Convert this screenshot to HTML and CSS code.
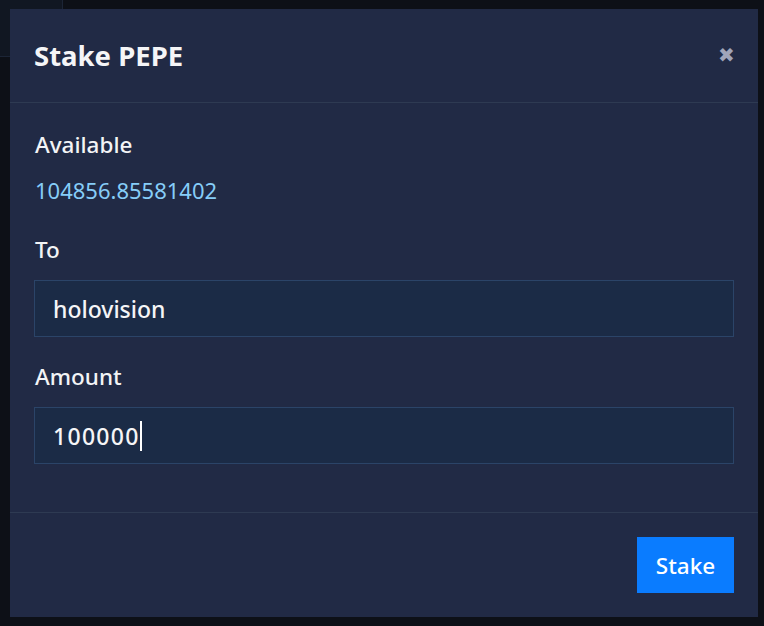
FILE: index.html
```html
<!DOCTYPE html>
<html>
<head>
<meta charset="utf-8">
<link rel="stylesheet" href="styles.css">
</head>
<body>
<div class="backdrop-card"></div>
<div class="modal">
  <div class="modal-header">
    <h2 class="modal-title">Stake PEPE</h2>
    <span class="close">✖</span>
  </div>
  <div class="modal-body">
    <div class="label">Available</div>
    <div class="value">104856.85581402</div>
    <div class="label">To</div>
    <div class="input">holovision</div>
    <div class="label">Amount</div>
    <div class="input num">100000<span class="caret"></span></div>
  </div>
  <div class="modal-footer">
    <button class="btn">Stake</button>
  </div>
</div>
</body>
</html>
```
FILE: styles.css
```css
html, body {
  margin: 0;
  padding: 0;
  background: #0d1017;
  width: 764px;
  height: 626px;
  overflow: hidden;
  font-family: "Noto Sans", "Open Sans", sans-serif;
}
body {
  position: relative;
}
.backdrop-card {
  position: absolute;
  left: 0;
  top: 0;
  width: 63px;
  height: 57px;
  background: #111722;
  border-right: 1px solid #1c2536;
  border-bottom: 1px solid #1c2536;
  box-sizing: border-box;
}
.modal {
  position: absolute;
  left: 10px;
  top: 9px;
  width: 748px;
  height: 608px;
  background: #212a45;
  display: flex;
  flex-direction: column;
  color: #f3f4f6;
}
.modal-header {
  height: 94px;
  flex: none;
  box-sizing: border-box;
  border-bottom: 1px solid #2e3a52;
  display: flex;
  align-items: center;
  justify-content: space-between;
  padding: 0 23px 0 24px;
}
.modal-title {
  margin: 0;
  font-size: 27.5px;
  font-weight: 700;
  color: #f5f5f7;
  letter-spacing: 0;
}
.close {
  color: #a0a5b9;
  font-size: 20px;
  line-height: 1;
  margin-top: -1px;
}
.modal-body {
  padding: 27px 24px 0 24px;
  border-bottom: 1px solid #2e3a52;
  box-sizing: border-box;
  height: 410px;
  flex: none;
}
.label {
  font-size: 22.5px;
  font-weight: 500;
  line-height: 30px;
  padding-left: 1px;
  margin-bottom: 15px;
}
.value {
  font-size: 22px;
  color: #86cdf8;
  line-height: 30px;
  padding-left: 1px;
  margin-bottom: 30px;
}
.input {
  height: 57px;
  box-sizing: border-box;
  background: #1b2b46;
  border: 1px solid #2b4468;
  font-size: 23px;
  font-weight: 500;
  color: #f5f5f7;
  display: flex;
  align-items: center;
  padding-left: 18px;
  margin-bottom: 25px;
}
.num {
  letter-spacing: 1.3px;
}
.caret {
  display: inline-block;
  width: 2px;
  height: 30px;
  background: #ffffff;
  margin-left: 0;
}
.modal-footer {
  flex: 1;
  display: flex;
  justify-content: flex-end;
  align-items: flex-start;
  padding: 24px 24px 0 0;
}
.btn {
  width: 97px;
  height: 56px;
  background: #0a7cff;
  border: none;
  color: #ffffff;
  font-family: "Noto Sans", "Open Sans", sans-serif;
  font-size: 22.5px;
  font-weight: 500;
  padding: 0;
}
```
